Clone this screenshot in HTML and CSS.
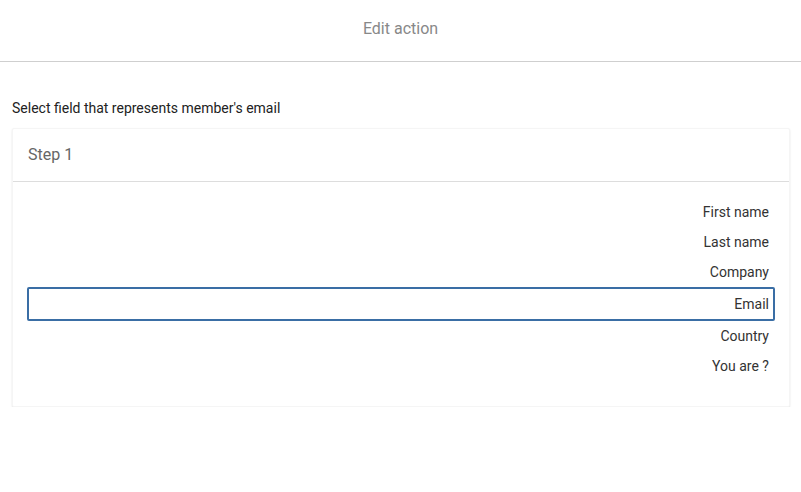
FILE: index.html
```html
<!DOCTYPE html>
<html>
<head>
<meta charset="utf-8">
<link rel="stylesheet" href="styles.css">
</head>
<body>
<header class="topbar">Edit action</header>
<main class="content">
  <p class="label">Select field that represents member's email</p>
  <section class="card">
    <div class="card-head">Step 1</div>
    <ul class="fields">
      <li class="field">First name</li>
      <li class="field">Last name</li>
      <li class="field">Company</li>
      <li class="field selected">Email</li>
      <li class="field">Country</li>
      <li class="field">You are ?</li>
    </ul>
  </section>
</main>
</body>
</html>
```
FILE: styles.css
```css
* { box-sizing: border-box; }
html, body { margin: 0; padding: 0; background: #fff; }
body { font-family: Roboto, "Liberation Sans", Arial, sans-serif; color: #222; }

.topbar {
  height: 62px;
  display: flex;
  align-items: center;
  justify-content: center;
  padding-bottom: 4px;
  font-size: 16px;
  color: #888;
  border-bottom: 1px solid #cfcfcf;
}

.content { padding: 0 11px 0 12px; }

.label {
  margin: 0;
  padding-top: 37px;
  font-size: 14px;
  line-height: 18px;
  color: #222;
  height: 66px;
}

.card {
  background: #fff;
  border: 1px solid #f5f5f5;
  border-radius: 2px;
  box-shadow: 0 1px 2px rgba(0,0,0,0.12);
}

.card-head {
  height: 53px;
  display: flex;
  align-items: center;
  padding-left: 15px;
  padding-bottom: 1px;
  font-size: 16px;
  color: #666;
  border-bottom: 1px solid #ddd;
}

.fields {
  list-style: none;
  margin: 0;
  padding: 15px 0 25px;
}

.field {
  margin: 0 14px;
  height: 30px;
  padding-top: 1px;
  line-height: 29px;
  text-align: right;
  padding-right: 6px;
  font-size: 14px;
  color: #333;
}

.field.selected {
  height: 34px;
  padding-top: 1px;
  line-height: 29px;
  border: 2px solid #3a6ea5;
  border-radius: 2px;
  padding-right: 4px;
}
```
